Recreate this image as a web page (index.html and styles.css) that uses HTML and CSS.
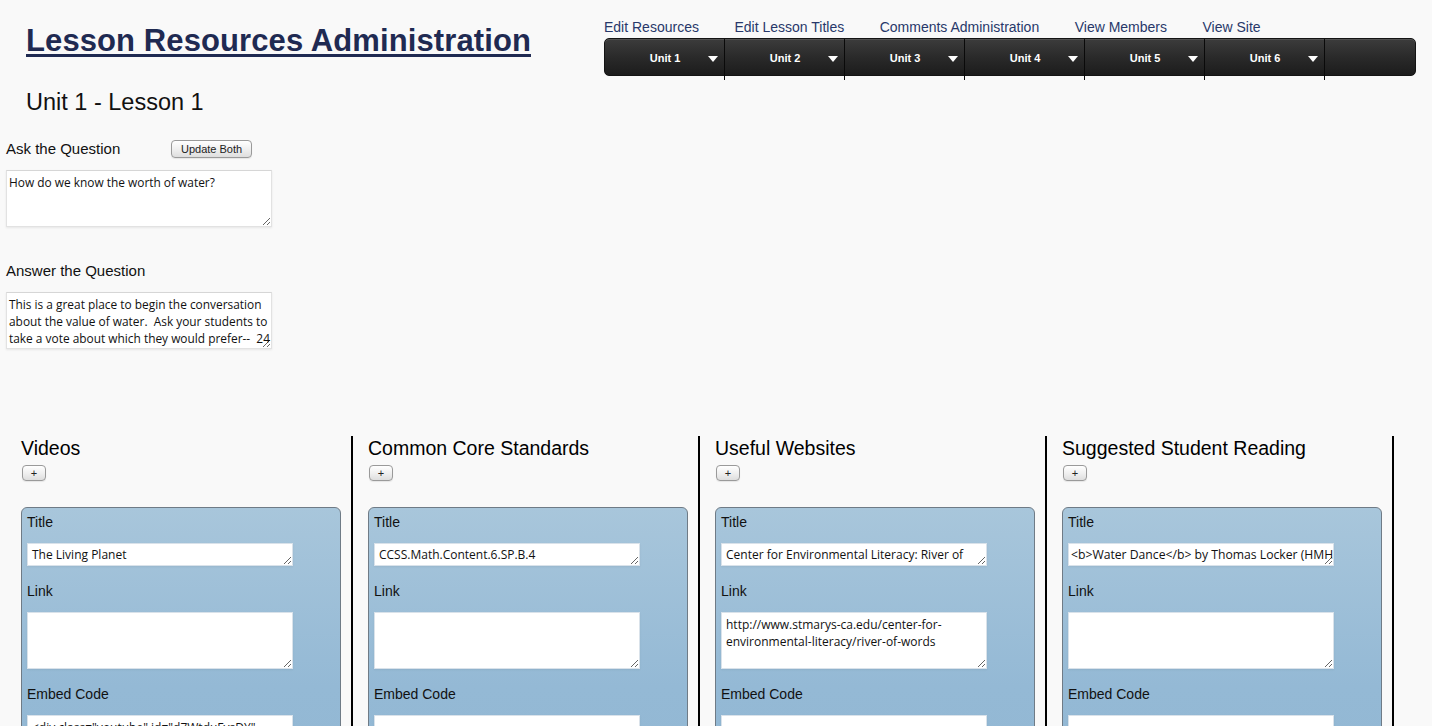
FILE: index.html
```html
<!DOCTYPE html>
<html>
<head>
<meta charset="utf-8">
<title>Lesson Resources Administration</title>
<link rel="stylesheet" href="styles.css">
</head>
<body>
<header class="top">
  <h1 class="site-title"><a href="#">Lesson Resources Administration</a></h1>
  <nav class="nav">
    <div class="nav-links">
      <a href="#">Edit Resources</a>
      <a href="#">Edit Lesson Titles</a>
      <a href="#">Comments Administration</a>
      <a href="#">View Members</a>
      <a href="#">View Site</a>
    </div>
    <div class="unit-bar">
      <div class="unit"><span>Unit 1</span><i class="caret"></i></div>
      <div class="unit"><span>Unit 2</span><i class="caret"></i></div>
      <div class="unit"><span>Unit 3</span><i class="caret"></i></div>
      <div class="unit"><span>Unit 4</span><i class="caret"></i></div>
      <div class="unit"><span>Unit 5</span><i class="caret"></i></div>
      <div class="unit"><span>Unit 6</span><i class="caret"></i></div>
    </div>
  </nav>
</header>

<h2 class="lesson">Unit 1 - Lesson 1</h2>

<section class="qa">
  <div class="qa-row">
    <label class="qa-label">Ask the Question</label>
    <button class="btn">Update Both</button>
  </div>
  <textarea class="qa-text">How do we know the worth of water?</textarea>
  <label class="qa-label qa-answer">Answer the Question</label>
  <textarea class="qa-text">This is a great place to begin the conversation about the value of water.  Ask your students to take a vote about which they would prefer--  24 hours without water or 24 hours without electricity.</textarea>
</section>

<section class="columns">
  <div class="col">
    <h3 class="col-title">Videos</h3>
    <button class="btn btn-plus">+</button>
    <div class="card">
      <label class="card-label">Title</label>
      <textarea class="field field-short">The Living Planet</textarea>
      <label class="card-label">Link</label>
      <textarea class="field field-tall"></textarea>
      <label class="card-label">Embed Code</label>
      <textarea class="field field-tall">&lt;div class="youtube" id="d7WtduFvsDY" style="width: 560px; height: 315px;"&gt;&lt;/div&gt;</textarea>
    </div>
  </div>
  <div class="col">
    <h3 class="col-title">Common Core Standards</h3>
    <button class="btn btn-plus">+</button>
    <div class="card">
      <label class="card-label">Title</label>
      <textarea class="field field-short">CCSS.Math.Content.6.SP.B.4</textarea>
      <label class="card-label">Link</label>
      <textarea class="field field-tall"></textarea>
      <label class="card-label">Embed Code</label>
      <textarea class="field field-tall"></textarea>
    </div>
  </div>
  <div class="col">
    <h3 class="col-title">Useful Websites</h3>
    <button class="btn btn-plus">+</button>
    <div class="card">
      <label class="card-label">Title</label>
      <textarea class="field field-short">Center for Environmental Literacy: River of Words</textarea>
      <label class="card-label">Link</label>
      <textarea class="field field-tall">http://www.stmarys-ca.edu/center-for-environmental-literacy/river-of-words</textarea>
      <label class="card-label">Embed Code</label>
      <textarea class="field field-tall"></textarea>
    </div>
  </div>
  <div class="col">
    <h3 class="col-title">Suggested Student Reading</h3>
    <button class="btn btn-plus">+</button>
    <div class="card">
      <label class="card-label">Title</label>
      <textarea class="field field-short field-clip">&lt;b&gt;Water Dance&lt;/b&gt; by Thomas Locker (HMH, 2002)</textarea>
      <label class="card-label">Link</label>
      <textarea class="field field-tall"></textarea>
      <label class="card-label">Embed Code</label>
      <textarea class="field field-tall"></textarea>
    </div>
  </div>
</section>
</body>
</html>
```

FILE: styles.css
```css
html, body {
  margin: 0;
  padding: 0;
  background: #f9f9f9;
  font-family: "Liberation Sans", Arial, sans-serif;
  color: #111;
  overflow: hidden;
}

.top {
  display: flex;
  align-items: flex-start;
  padding-right: 16px;
  height: 80px;
}

.site-title {
  margin: 23px 0 0 26px;
  font-size: 31px;
  line-height: 36px;
  font-weight: bold;
  letter-spacing: 0.1px;
}
.site-title a {
  color: #1f2a52;
  text-decoration: underline;
  text-decoration-thickness: 3px;
  text-underline-offset: 3px;
}

.nav {
  margin-left: auto;
  width: 812px;
  padding-top: 18px;
}
.nav-links {
  display: flex;
  height: 18px;
  margin-bottom: 2px;
}
.nav-links a {
  font-size: 14px;
  line-height: 18px;
  color: #28386a;
  text-decoration: none;
  margin-right: 35.5px;
}

.unit-bar {
  display: flex;
  height: 38px;
  box-sizing: border-box;
  border: 1px solid #141414;
  border-radius: 5px;
  background: linear-gradient(#3c3c3c, #2a2a2a 50%, #1c1c1c);
  box-shadow: inset 0 1px 0 rgba(255,255,255,0.12);
}
.unit {
  position: relative;
  width: 119px;
  height: 41px;
  border-right: 1px solid #0a0a0a;
  display: flex;
  justify-content: center;
  flex-shrink: 0;
}
.unit span {
  color: #fff;
  font-size: 11px;
  font-weight: bold;
  line-height: 38px;
  height: 38px;
  padding-left: 1px;
}
.caret {
  position: absolute;
  right: 6px;
  top: 17px;
  width: 0;
  height: 0;
  border-left: 5px solid transparent;
  border-right: 5px solid transparent;
  border-top: 6px solid #fff;
}

.lesson {
  margin: 8px 0 0 26px;
  font-size: 23.5px;
  line-height: 28px;
  font-weight: normal;
  color: #111;
}

.qa {
  padding-left: 6px;
  display: flex;
  flex-direction: column;
  align-items: flex-start;
}
.qa-row {
  display: flex;
  align-items: center;
  margin-top: 24px;
  height: 18px;
}
.qa-label {
  display: block;
  font-size: 15px;
  line-height: 18px;
  color: #111;
}
.qa-row .qa-label {
  width: 165px;
}
.qa-answer {
  margin-top: 35px;
}

.btn {
  font-family: "Liberation Sans", Arial, sans-serif;
  font-size: 11px;
  color: #222;
  height: 18px;
  padding: 0 9px;
  border: 1px solid #9a9a9a;
  border-radius: 4px;
  background: linear-gradient(#ffffff, #f0f0f0 50%, #dedede);
  box-shadow: 0 1px 1px rgba(0,0,0,0.08);
  line-height: 16px;
}

.qa-text {
  display: block;
  box-sizing: border-box;
  width: 266px;
  height: 57px;
  margin-top: 12px;
  padding: 3px 0 3px 2px;
  font-family: "Open Sans", "DejaVu Sans", sans-serif;
  font-size: 11.9px;
  line-height: 17px;
  color: #111;
  background: #fff;
  border: 1px solid #e2e2e2;
  border-top-color: #d6d6d6;
  box-shadow: 0 1px 2px rgba(0,0,0,0.08);
  resize: vertical;
  overflow: hidden;
}

.columns {
  display: flex;
  padding-left: 6px;
  margin-top: 87px;
}
.col {
  width: 330px;
  height: 320px;
  padding-left: 15px;
  border-right: 2px solid #000;
  flex-shrink: 0;
}
.col-title {
  margin: 0;
  font-size: 19.5px;
  line-height: 24px;
  font-weight: normal;
  color: #000;
}
.btn-plus {
  display: block;
  margin: 5px 0 0 1px;
  width: 24px;
  height: 16px;
  padding: 0;
  line-height: 13px;
  font-size: 11px;
}

.card {
  margin-top: 26px;
  width: 320px;
  box-sizing: border-box;
  height: 300px;
  padding: 4px 5px 0 5px;
  border: 1px solid #6f7b86;
  border-radius: 6px;
  background: linear-gradient(#a8c6db, #94b9d5 60%, #92b7d3);
}
.card-label {
  display: block;
  font-size: 14px;
  line-height: 20px;
  color: #111;
  margin-bottom: 11px;
}
.field {
  display: block;
  box-sizing: border-box;
  width: 266px;
  margin: 0 0 15px 0;
  padding: 3px 2px 3px 4px;
  font-family: "Open Sans", "DejaVu Sans", sans-serif;
  font-size: 12px;
  line-height: 17px;
  color: #111;
  background: #fff;
  border: 1px solid #d9e2ea;
  box-shadow: 0 1px 2px rgba(0,0,0,0.06);
  resize: vertical;
  overflow: hidden;
}
.field-short {
  height: 23px;
  padding-top: 2px;
}
.field-clip {
  white-space: pre;
  padding-left: 2px;
  font-size: 12.2px;
}
.field-tall {
  height: 57px;
}
```
